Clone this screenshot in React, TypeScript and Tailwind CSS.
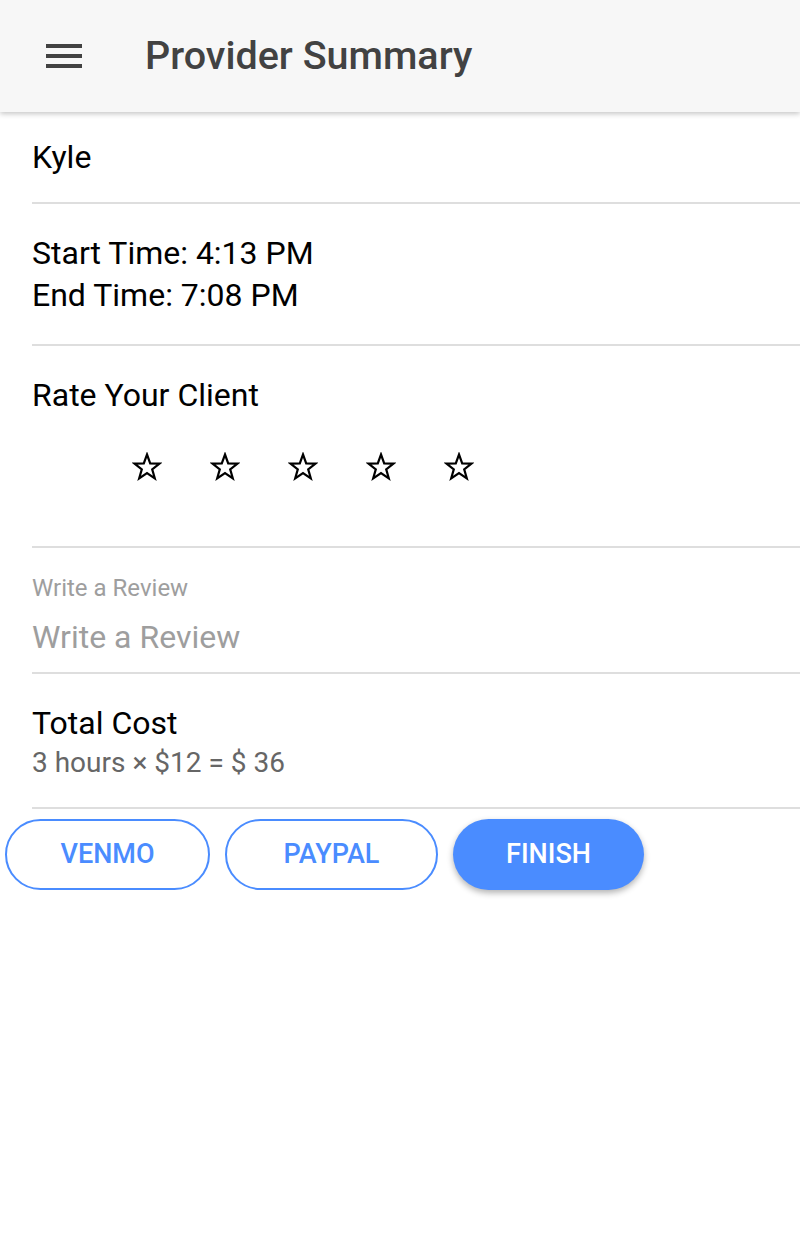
import React from "react";

function Star() {
  return (
    <svg width="30" height="30" viewBox="0 0 30 30" className="block">
      <polygon
        points="15,2.5 18.2,11.3 27.5,11.6 20.2,17.3 22.8,26.3 15,21 7.2,26.3 9.8,17.3 2.5,11.6 11.8,11.3"
        fill="none"
        stroke="#000"
        strokeWidth="2.2"
        strokeLinejoin="miter"
      />
    </svg>
  );
}

export default function App() {
  return (
    <div className="w-[800px] min-h-[1250px] bg-white font-['Roboto',sans-serif] text-black">
      <header className="h-[112px] bg-[#f7f7f7] flex items-center shadow-[0_2px_5px_rgba(0,0,0,0.22)] relative z-10">
        <div className="ml-[46px] w-[36px] flex flex-col gap-[6px]">
          <div className="h-[4px] bg-[#424242]" />
          <div className="h-[4px] bg-[#424242]" />
          <div className="h-[4px] bg-[#424242]" />
        </div>
        <h1 className="ml-[63px] text-[39.5px] font-medium text-[#424242] leading-none">
          Provider Summary
        </h1>
      </header>

      <div className="pl-[32px]">
        <div className="h-[92px] pt-[24px] border-b-2 border-[#dedede]">
          <div className="text-[32px] leading-[42px]">Kyle</div>
        </div>
        <div className="h-[142px] pt-[28px] border-b-2 border-[#dedede] text-[32px] leading-[42px]">
          <div>Start Time: 4:13 PM</div>
          <div>End Time: 7:08 PM</div>
        </div>
        <div className="h-[202px] pt-[28px] border-b-2 border-[#dedede]">
          <div className="text-[32px] leading-[42px]">Rate Your Client</div>
          <div className="flex gap-[48px] ml-[100px] mt-[36px]">
            <Star />
            <Star />
            <Star />
            <Star />
            <Star />
          </div>
        </div>
        <div className="h-[126px] pt-[27px] border-b-2 border-[#dedede]">
          <div className="text-[24px] leading-[26px] text-[#9e9e9e]">Write a Review</div>
          <div className="text-[32px] leading-[46px] text-[#9e9e9e] mt-[13px]">Write a Review</div>
        </div>
        <div className="h-[135px] pt-[29px] border-b-2 border-[#dedede]">
          <div className="text-[32px] leading-[40px]">Total Cost</div>
          <div className="text-[28px] leading-[36px] text-[#666] mt-[2px]">3 hours × $12 = $ 36</div>
        </div>
      </div>

      <div className="flex items-center pl-[5px] pt-[10px] gap-[15px]">
        <button className="w-[205px] h-[71px] rounded-full border-2 border-[#4a8cff] bg-white text-[#4a8cff] text-[27px] font-medium">
          VENMO
        </button>
        <button className="w-[213px] h-[71px] rounded-full border-2 border-[#4a8cff] bg-white text-[#4a8cff] text-[27px] font-medium">
          PAYPAL
        </button>
        <button className="w-[191px] h-[71px] rounded-full bg-[#4a8cff] text-white text-[27px] font-medium shadow-[0_3px_6px_rgba(0,0,0,0.3)]">
          FINISH
        </button>
      </div>
    </div>
  );
}
